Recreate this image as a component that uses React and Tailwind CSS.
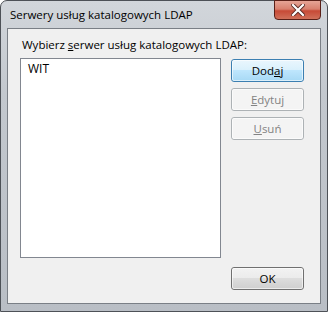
import React from "react";

const font = { fontFamily: '"Open Sans", "Noto Sans", "Liberation Sans", sans-serif' };

const WinButton = ({ children, variant = "normal", className = "" }) => {
  const styles = {
    normal:
      "border-[#707070] bg-[linear-gradient(#f2f2f2_0%,#ebebeb_49%,#dddddd_50%,#cfcfcf_100%)] text-black",
    default:
      "border-[#3c7fb1] bg-[linear-gradient(#eaf6fd_0%,#d9f0fc_49%,#bee6fd_50%,#a7d9f5_100%)] text-black",
    disabled: "border-[#adb2b5] bg-[#f4f4f4] text-[#838383]",
  };
  return (
    <button
      type="button"
      className={`w-[73px] h-[23px] rounded-[3px] border text-[11.5px] leading-none flex items-center justify-center ${styles[variant]} ${className}`}
    >
      <span className="rounded-[2px] w-full h-full flex items-center justify-center border border-white/60">
        {children}
      </span>
    </button>
  );
};

const App = () => {
  return (
    <div
      className="relative w-[328px] h-[312px] rounded-t-[7px] border border-[#4d5157] bg-[linear-gradient(#d2d6db_0%,#c3c8ce_30%,#b9bec5_100%)] flex flex-col text-black"
      style={font}
    >
      {/* title bar */}
      <div className="h-[27px] flex items-center pl-[9px] text-[11.5px] text-black">
        Serwery usług katalogowych LDAP
      </div>
      <div className="absolute top-[-1px] right-[6px] w-[47px] h-[20px] rounded-b-[4px] border border-[#5a2018] bg-[linear-gradient(#e6a496_0%,#d8806e_45%,#c74a36_55%,#d0705a_100%)] flex items-center justify-center">
        <svg width="14" height="12" viewBox="0 0 14 12">
          <path
            d="M2 1 L12 11 M12 1 L2 11"
            stroke="#5a2a24"
            strokeWidth="4"
            strokeLinecap="square"
          />
          <path
            d="M2 1 L12 11 M12 1 L2 11"
            stroke="#ffffff"
            strokeWidth="2.2"
            strokeLinecap="square"
          />
        </svg>
      </div>

      {/* client area */}
      <div className="flex-1 mx-[6px] mb-[7px] border border-[#7a7f86] bg-[#f0f0f0] flex flex-col px-[12px] pt-[8px]">
        <div className="text-[11.5px] leading-[16px] pl-[2px]">
          Wybierz <u>s</u>erwer usług katalogowych LDAP:
        </div>
        <div className="flex mt-[5px]">
          <div className="w-[201px] h-[200px] border border-[#828790] bg-white px-[7px] pt-[2px] text-[12px] leading-[16px]">
            WIT
          </div>
          <div className="flex flex-col gap-[6px] ml-[10px] mt-[1px]">
            <WinButton variant="default">
              Dod<u>a</u>j
            </WinButton>
            <WinButton variant="disabled">
              <u>E</u>dytuj
            </WinButton>
            <WinButton variant="disabled">
              <u>U</u>suń
            </WinButton>
          </div>
        </div>
        <div className="flex justify-end mt-[9px] pr-[4px]">
          <WinButton>OK</WinButton>
        </div>
      </div>
    </div>
  );
};

export default App;
